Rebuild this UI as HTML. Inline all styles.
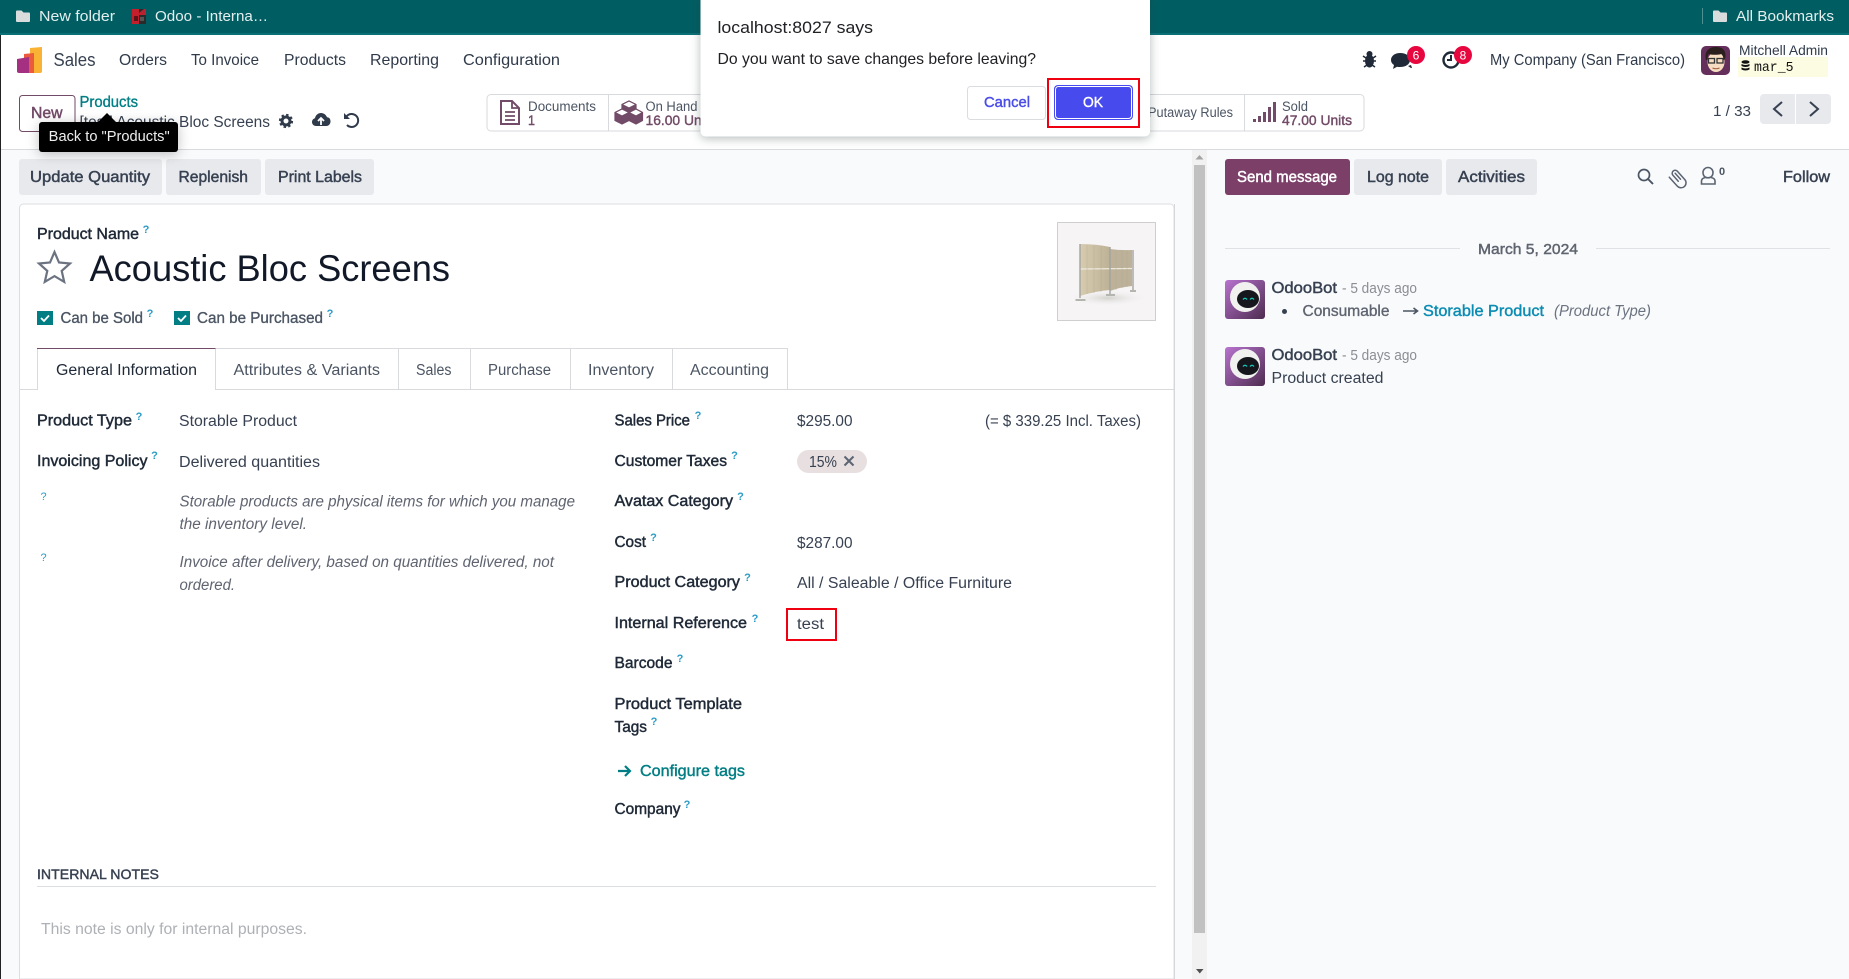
<!DOCTYPE html>
<html><head><meta charset="utf-8"><title>Acoustic Bloc Screens</title>
<style>
html,body{margin:0;padding:0;width:1849px;height:979px;overflow:hidden;background:#fff}
svg{display:block}
text{font-family:"Liberation Sans",sans-serif;font-size:15.5px;fill:#374151;white-space:pre}
.l{fill:#1f2937;stroke:#1f2937;stroke-width:.45}
.i{font-style:italic;fill:#5f6470}
.q{font-size:11px;font-weight:700;fill:#2b9cc6;text-anchor:middle}
.top{fill:#e4eeee;font-size:15px}
.m{font-size:16px;fill:#2f3a4a}
.s{font-size:13.5px;fill:#4b5563}
.sb{font-size:13.5px;fill:#714b67;stroke:#714b67;stroke-width:.4}
.btn{fill:#374151;stroke:#374151;stroke-width:.45;font-size:15.5px}
</style></head><body>
<svg xmlns="http://www.w3.org/2000/svg" width="1849" height="979" viewBox="0 0 1849 979">
<defs>
<linearGradient id="bot" x1="0" y1="0" x2="1" y2="1"><stop offset="0" stop-color="#b873cf"/><stop offset="1" stop-color="#4e2c50"/></linearGradient>
<linearGradient id="scr" x1="0" y1="0" x2="1" y2="0"><stop offset="0" stop-color="#d8ccb0"/><stop offset="1" stop-color="#bdb196"/></linearGradient>
<radialGradient id="shd"><stop offset="0" stop-color="#d2d2cd"/><stop offset="1" stop-color="#f5f3f4" stop-opacity="0"/></radialGradient>
</defs>

<!-- page backgrounds -->
<rect x="0" y="0" width="1849" height="979" fill="#fff"/>
<rect x="0" y="150" width="1849" height="829" fill="#f9fafb"/>
<rect x="0" y="149" width="1849" height="1" fill="#d8dadd"/>
<rect x="0" y="0" width="1849" height="34" fill="#005e63"/>
<rect x="0" y="33" width="1849" height="2" fill="#0b7076"/>
<rect x="0" y="35" width="1" height="944" fill="#222"/>

<!-- bookmarks -->
<path d="M16 11.500a1 1 0 0 1 1-1h4.500l2 2H29a1 1 0 0 1 1 1V21a1 1 0 0 1-1 1H17a1 1 0 0 1-1-1z" fill="#d9dcdc"/>
<text class="top" x="39" y="21" textLength="76" lengthAdjust="spacingAndGlyphs">New folder</text>
<rect x="132" y="9" width="14" height="15" fill="#2a2a2a"/><path d="M132 9h7v15h-7z" fill="#c4202c"/><path d="M139 13l5-4h2v6h-7z" fill="#b8232f"/><rect x="134" y="16" width="4" height="5" fill="#5c1218"/><rect x="140" y="17" width="4" height="4" fill="#555"/>
<text class="top" x="155" y="21" textLength="113" lengthAdjust="spacingAndGlyphs">Odoo - Interna…</text>
<rect x="1702" y="8" width="1" height="16" fill="#4d8f93"/>
<path d="M1713 11.500a1 1 0 0 1 1-1h4.500l2 2h5.500a1 1 0 0 1 1 1V21a1 1 0 0 1-1 1h-12a1 1 0 0 1-1-1z" fill="#d9dcdc"/>
<text class="top" x="1736" y="21" textLength="98" lengthAdjust="spacingAndGlyphs">All Bookmarks</text>

<!-- nav -->
<path d="M30 48l12-1v24a2 2 0 0 1-2 2H30z" fill="#f9b233"/>
<path d="M24 54l10-1v20H24z" fill="#ec5a3c"/>
<path d="M17 59l12-2v16H19a2 2 0 0 1-2-2z" fill="#a52f80"/>
<text x="53.500" y="66" style="font-size:18px;fill:#374151" textLength="42" lengthAdjust="spacingAndGlyphs">Sales</text>
<text class="m" x="119" y="65" textLength="48" lengthAdjust="spacingAndGlyphs">Orders</text>
<text class="m" x="191" y="65" textLength="68" lengthAdjust="spacingAndGlyphs">To Invoice</text>
<text class="m" x="284" y="65" textLength="62" lengthAdjust="spacingAndGlyphs">Products</text>
<text class="m" x="370" y="65" textLength="69" lengthAdjust="spacingAndGlyphs">Reporting</text>
<text class="m" x="463" y="65" textLength="97" lengthAdjust="spacingAndGlyphs">Configuration</text>

<!-- bug -->
<g fill="#1f2937"><ellipse cx="1369.500" cy="61" rx="4.500" ry="6.500"/><circle cx="1369.500" cy="54" r="3"/></g>
<path d="M1363 56l3 2M1376 56l-3 2M1363 61h3M1376 61h-3M1364 67l3-2M1375 67l-3-2" stroke="#1f2937" stroke-width="1.500" fill="none"/>
<!-- chat -->
<path d="M1400 53c6 0 10 3 10 7s-4 7-10 7c-1 0-2 0-3-.3l-4 2.300 1-4c-2-1.300-3-3-3-5 0-4 4-7 9-7z" fill="#1f2937"/>
<path d="M1408 66l3 2 1 0-1-3z" fill="#1f2937"/>
<circle cx="1416" cy="55" r="9" fill="#e8063f"/>
<text x="1416" y="59.500" style="font-size:12px;fill:#fff;text-anchor:middle">6</text>
<!-- clock -->
<circle cx="1451" cy="60" r="7.500" fill="none" stroke="#1f2937" stroke-width="2.400"/>
<path d="M1451 55v5h-4" stroke="#1f2937" stroke-width="2" fill="none"/>
<circle cx="1463" cy="55" r="9" fill="#e8063f"/>
<text x="1463" y="59.500" style="font-size:12px;fill:#fff;text-anchor:middle">8</text>
<text x="1490" y="65" style="font-size:16px;fill:#2f3a4a" textLength="195" lengthAdjust="spacingAndGlyphs">My Company (San Francisco)</text>

<!-- user avatar -->
<rect x="1701" y="46" width="29" height="29" rx="5" fill="#642f5a"/>
<ellipse cx="1716" cy="62" rx="8.500" ry="10" fill="#f6dcc0"/>
<path d="M1706 60c-2-9 3-13 10-13s11 4 9 12l-1.500 1c0-3-1-5-2-6-4 1-9 1-13 0-1 1-1 4-1 6z" fill="#2a1f1c"/>
<rect x="1708.500" y="58.500" width="6" height="4.500" fill="none" stroke="#333" stroke-width="1.300"/><rect x="1717" y="58.500" width="6" height="4.500" fill="none" stroke="#333" stroke-width="1.300"/>
<path d="M1712.500 68q3.500 1.500 7 0" stroke="#a0603f" fill="none"/>
<text x="1739" y="55" style="font-size:14px;fill:#2f3a4a" textLength="89" lengthAdjust="spacingAndGlyphs">Mitchell Admin</text>
<rect x="1738" y="57" width="90" height="20" fill="#fcfce2"/>
<g fill="#111"><ellipse cx="1745.500" cy="62" rx="4" ry="1.800"/><path d="M1741.500 64q4 2 8 0v2q-4 2-8 0z"/><path d="M1741.500 67.500q4 2 8 0v2q-4 2-8 0z"/></g>
<text x="1754" y="71" style='font-family:"Liberation Mono",monospace;font-size:14px;fill:#111' textLength="39.500" lengthAdjust="spacingAndGlyphs">mar_5</text>

<!-- control panel -->
<rect x="19.500" y="95.500" width="55.500" height="36" rx="3" fill="#fff" stroke="#714b67"/>
<text x="31" y="118" style="fill:#714b67;stroke:#714b67;stroke-width:.45;font-size:15.500px" textLength="31.500" lengthAdjust="spacingAndGlyphs">New</text>
<text x="79.500" y="107" style="fill:#017e84;stroke:#017e84;stroke-width:.35;font-size:15.500px" textLength="58.500" lengthAdjust="spacingAndGlyphs">Products</text>
<text x="79.500" y="127" style="font-size:15.500px;fill:#374151" textLength="190.500" lengthAdjust="spacingAndGlyphs">[test] Acoustic Bloc Screens</text>
<!-- gear -->
<circle cx="286" cy="121" r="4" fill="none" stroke="#2f3a4a" stroke-width="3"/>
<circle cx="286" cy="121" r="6" fill="none" stroke="#2f3a4a" stroke-width="2.200" stroke-dasharray="2.400 2.300"/>
<!-- cloud -->
<path d="M316 126c-2.500 0-4-2-4-4s1.500-3.500 3-3.800c.500-3 3-5.200 6-5.200s5 1.800 6 4.300c2.500 0 3.500 2 3.500 4.200s-1.700 4.500-4 4.500z" fill="#2f3a4a"/>
<path d="M321 125v-6M318 121l3-3 3 3" stroke="#fff" stroke-width="1.800" fill="none"/>
<!-- undo -->
<path d="M346.500 116.500a6.500 6.500 0 1 1 .5 8.500" stroke="#2f3a4a" stroke-width="2" fill="none"/>
<path d="M344 113v6h6z" fill="#2f3a4a"/>

<!-- stat buttons -->
<rect x="487" y="94.500" width="877" height="36.500" rx="4" fill="#fff" stroke="#d8dadd"/>
<rect x="608" y="95" width="1" height="36" fill="#d8dadd"/>
<rect x="1244" y="95" width="1" height="36" fill="#d8dadd"/>
<path d="M501 101h11l7 7v16h-18z" fill="none" stroke="#714b67" stroke-width="2"/>
<path d="M512 101v7h7M505 112h10M505 116h10M505 120h10" fill="none" stroke="#714b67" stroke-width="1.800"/>
<text class="s" x="528" y="111" textLength="68" lengthAdjust="spacingAndGlyphs">Documents</text>
<text class="sb" x="528" y="125" textLength="7" lengthAdjust="spacingAndGlyphs">1</text>
<g stroke="#714b67" stroke-width="1.200" stroke-linejoin="round">
<path d="M629 101l7 3.500v8l-7 3.500-7-3.500v-8z" fill="#714b67"/><path d="M629 101l7 3.500-7 3.500-7-3.500z" fill="#fff"/>
<path d="M622 109l7 3.500v8l-7 3.500-7-3.500v-8z" fill="#714b67"/><path d="M622 109l7 3.500-7 3.500-7-3.500z" fill="#fff"/><path d="M622 116v8"/>
<path d="M636 109l6.500 3.500v8l-6.500 3.500-7-3.500v-8z" fill="#714b67"/><path d="M636 109l6.500 3.500-6.500 3.500-7-3.500z" fill="#fff"/>
</g>
<text class="s" x="645.500" y="111" textLength="52" lengthAdjust="spacingAndGlyphs">On Hand</text>
<text class="sb" x="645.500" y="125" textLength="70" lengthAdjust="spacingAndGlyphs">16.00 Units</text>
<text class="s" x="1148" y="117" textLength="85" lengthAdjust="spacingAndGlyphs">Putaway Rules</text>
<g fill="#714b67"><rect x="1253" y="119" width="3" height="3"/><rect x="1258" y="116" width="3" height="6"/><rect x="1263" y="112" width="3" height="10"/><rect x="1268" y="107" width="3" height="15"/><rect x="1273" y="102" width="3" height="20"/></g>
<text class="s" x="1282" y="111" textLength="26" lengthAdjust="spacingAndGlyphs">Sold</text>
<text class="sb" x="1282" y="125" textLength="70" lengthAdjust="spacingAndGlyphs">47.00 Units</text>

<!-- pager -->
<text x="1713" y="116" style="font-size:15px;fill:#374151" textLength="38" lengthAdjust="spacingAndGlyphs">1 / 33</text>
<path d="M1760 98a4 4 0 0 1 4-4h31v30h-31a4 4 0 0 1-4-4z" fill="#e7e9ed"/>
<path d="M1796 94h31a4 4 0 0 1 4 4v22a4 4 0 0 1-4 4h-31z" fill="#e7e9ed"/>
<path d="M1782 102l-8 7 8 7M1810 102l8 7-8 7" fill="none" stroke="#374151" stroke-width="2"/>

<!-- action buttons -->
<rect x="19" y="159" width="143" height="36" rx="3" fill="#e7e9ed"/>
<rect x="166" y="159" width="95" height="36" rx="3" fill="#e7e9ed"/>
<rect x="265" y="159" width="109" height="36" rx="3" fill="#e7e9ed"/>
<text class="btn" x="30" y="182" textLength="120" lengthAdjust="spacingAndGlyphs">Update Quantity</text>
<text class="btn" x="178.500" y="182" textLength="69.500" lengthAdjust="spacingAndGlyphs">Replenish</text>
<text class="btn" x="278" y="182" textLength="84" lengthAdjust="spacingAndGlyphs">Print Labels</text>

<rect x="1225" y="159" width="125" height="36" rx="3" fill="#7b3f68"/>
<rect x="1354" y="159" width="88" height="36" rx="3" fill="#e7e9ed"/>
<rect x="1446" y="159" width="91" height="36" rx="3" fill="#e7e9ed"/>
<text class="btn" x="1237" y="182" style="fill:#fff;stroke:#fff" textLength="100" lengthAdjust="spacingAndGlyphs">Send message</text>
<text class="btn" x="1367" y="182" textLength="62" lengthAdjust="spacingAndGlyphs">Log note</text>
<text class="btn" x="1458" y="182" textLength="67" lengthAdjust="spacingAndGlyphs">Activities</text>
<text class="btn" x="1783" y="182" textLength="47" lengthAdjust="spacingAndGlyphs">Follow</text>
<!-- chatter tool icons -->
<circle cx="1644" cy="175" r="5.500" fill="none" stroke="#4b5563" stroke-width="1.700"/>
<path d="M1648 179l5 5" stroke="#4b5563" stroke-width="1.900"/>
<g transform="rotate(-42 1678.500 177)" fill="none" stroke="#5b6472" stroke-width="1.500" stroke-linecap="round"><path d="M1675.500 180v-8a3 3 0 0 1 6 0v11a5 5 0 0 1-10 0v-12"/><path d="M1678.500 180v-8"/></g>
<path d="M1703 172.500a5 5 0 0 1 10 0c0 2-.800 3.500-2 4.500-1.800 1-4.200 1-6 0-1.200-1-2-2.500-2-4.500z" fill="none" stroke="#5b6472" stroke-width="1.600"/>
<path d="M1705.500 177.500c-2.500.500-4 1.500-4 3.500v3h13.500v-3c0-2-1.500-3-4-3.500" fill="none" stroke="#5b6472" stroke-width="1.600"/>
<text x="1722" y="175" style="font-size:11px;font-weight:700;fill:#4b5563;text-anchor:middle">0</text>

<!-- card -->
<path d="M19.500 979V208a4 4 0 0 1 4-4H1170a4 4 0 0 1 4 4v771z" fill="#fff" stroke="#dcdee2" stroke-width="1"/>
<rect x="1174" y="204" width="1" height="775" fill="#d5d7db"/>

<text class="l" x="37" y="239" textLength="102" lengthAdjust="spacingAndGlyphs">Product Name</text>
<text class="q" x="146" y="233">?</text>
<path d="M54.500 252l4.500 10.500 11 1-8.300 7.400 2.500 11-9.700-5.800-9.700 5.800 2.500-11-8.300-7.400 11-1z" fill="none" stroke="#6b7280" stroke-width="2.200"/>
<text x="89.500" y="281" style="font-size:37px;fill:#111827" textLength="360.500" lengthAdjust="spacingAndGlyphs">Acoustic Bloc Screens</text>

<rect x="37" y="311" width="16" height="14" fill="#017e84"/>
<path d="M41 318l3 3 5-5.500" fill="none" stroke="#fff" stroke-width="1.800"/>
<text x="60.500" y="323" style="font-size:15.500px;fill:#4b5563;stroke:#4b5563;stroke-width:.35" textLength="82.500" lengthAdjust="spacingAndGlyphs">Can be Sold</text>
<text class="q" x="150" y="317">?</text>
<rect x="174" y="311" width="16" height="14" fill="#017e84"/>
<path d="M178 318l3 3 5-5.500" fill="none" stroke="#fff" stroke-width="1.800"/>
<text x="197" y="323" style="font-size:15.500px;fill:#4b5563;stroke:#4b5563;stroke-width:.35" textLength="126" lengthAdjust="spacingAndGlyphs">Can be Purchased</text>
<text class="q" x="330" y="317">?</text>

<!-- product image -->
<rect x="1057.500" y="222.500" width="98" height="98" fill="#f6f4f5" stroke="#cfcfcf"/>
<ellipse cx="1108" cy="298" rx="40" ry="8" fill="url(#shd)"/>
<path d="M1080 244q17 0 30 3v43q-14 1-30 6z" fill="url(#scr)"/>
<path d="M1110 249q10 1.500 22 1v36q-11 1-22 5z" fill="#bdb299"/>
<path d="M1080 269l52-.500" stroke="#eee9dd" stroke-width="1.300"/>
<g stroke="#ad a38b" stroke-width="0"></g>
<g stroke="#aea58d" stroke-width=".5" opacity=".7"><path d="M1087 245v49M1094 246v47M1101 246v46M1116 250v40M1122 250v38M1127 250v37"/></g>
<path d="M1080 244v54M1110 247v47M1133 250v41" stroke="#a3a39e" stroke-width="1.400"/>
<path d="M1075.500 300h10M1106 295h9M1130 291h6" stroke="#b5b5b0" stroke-width="2"/>

<!-- tabs -->
<rect x="20" y="389" width="1154" height="1" fill="#d8dadd"/>
<path d="M215.500 348.500H787.500V389M398.500 348V389M470.500 348V389M570.500 348V389M672.500 348V389" fill="none" stroke="#d8dadd"/>
<rect x="37.500" y="348.500" width="178" height="42" fill="#fff"/>
<path d="M37.500 390V348.500H215.500V390" fill="none" stroke="#d8dadd"/>
<rect x="37" y="348" width="178.500" height="1" fill="#714b67"/>
<text x="56" y="375" style="font-size:15.500px;fill:#1f2937" textLength="141" lengthAdjust="spacingAndGlyphs">General Information</text>
<text x="233.500" y="375" style="font-size:15.500px;fill:#4b5563" textLength="146.500" lengthAdjust="spacingAndGlyphs">Attributes &amp; Variants</text>
<text x="416" y="375" style="font-size:15.500px;fill:#4b5563" textLength="35.500" lengthAdjust="spacingAndGlyphs">Sales</text>
<text x="488" y="375" style="font-size:15.500px;fill:#4b5563" textLength="63" lengthAdjust="spacingAndGlyphs">Purchase</text>
<text x="588" y="375" style="font-size:15.500px;fill:#4b5563" textLength="66" lengthAdjust="spacingAndGlyphs">Inventory</text>
<text x="690" y="375" style="font-size:15.500px;fill:#4b5563" textLength="79" lengthAdjust="spacingAndGlyphs">Accounting</text>

<!-- left fields -->
<text class="l" x="37" y="425.500" textLength="95" lengthAdjust="spacingAndGlyphs">Product Type</text>
<text class="q" x="139" y="420">?</text>
<text x="179" y="426" textLength="118" lengthAdjust="spacingAndGlyphs">Storable Product</text>
<text class="l" x="37" y="466" textLength="110.500" lengthAdjust="spacingAndGlyphs">Invoicing Policy</text>
<text class="q" x="154.500" y="459">?</text>
<text x="179" y="467" textLength="141" lengthAdjust="spacingAndGlyphs">Delivered quantities</text>
<text class="q" x="43.600" y="500" style="font-weight:400">?</text>
<text class="i" x="179.500" y="506.500" textLength="395.500" lengthAdjust="spacingAndGlyphs">Storable products are physical items for which you manage</text>
<text class="i" x="179.500" y="529" textLength="127.500" lengthAdjust="spacingAndGlyphs">the inventory level.</text>
<text class="q" x="43.600" y="561" style="font-weight:400">?</text>
<text class="i" x="179.500" y="567" textLength="374.500" lengthAdjust="spacingAndGlyphs">Invoice after delivery, based on quantities delivered, not</text>
<text class="i" x="179.500" y="590" textLength="55.500" lengthAdjust="spacingAndGlyphs">ordered.</text>

<!-- right fields -->
<text class="l" x="614.500" y="425.500" textLength="75.500" lengthAdjust="spacingAndGlyphs">Sales Price</text>
<text class="q" x="698" y="419">?</text>
<text x="797" y="426" textLength="55.500" lengthAdjust="spacingAndGlyphs">$295.00</text>
<text x="985" y="426" textLength="156" lengthAdjust="spacingAndGlyphs">(= $ 339.25 Incl. Taxes)</text>
<text class="l" x="614.500" y="466" textLength="112.500" lengthAdjust="spacingAndGlyphs">Customer Taxes</text>
<text class="q" x="734.500" y="459">?</text>
<rect x="797" y="450" width="70" height="23" rx="11.500" fill="#e7dfe0"/>
<text x="809" y="467" textLength="28" lengthAdjust="spacingAndGlyphs">15%</text>
<path d="M844.500 465.500l9-9M844.500 456.500l9 9" stroke="#5b6472" stroke-width="2"/>
<text class="l" x="614.500" y="506" textLength="118.500" lengthAdjust="spacingAndGlyphs">Avatax Category</text>
<text class="q" x="740.500" y="500">?</text>
<text class="l" x="614.500" y="547" textLength="31.500" lengthAdjust="spacingAndGlyphs">Cost</text>
<text class="q" x="653.500" y="541">?</text>
<text x="797" y="548" textLength="55.500" lengthAdjust="spacingAndGlyphs">$287.00</text>
<text class="l" x="614.500" y="587" textLength="125.500" lengthAdjust="spacingAndGlyphs">Product Category</text>
<text class="q" x="747.500" y="581">?</text>
<text x="797" y="588" textLength="215" lengthAdjust="spacingAndGlyphs">All / Saleable / Office Furniture</text>
<text class="l" x="614.500" y="628" textLength="132.500" lengthAdjust="spacingAndGlyphs">Internal Reference</text>
<text class="q" x="755" y="622">?</text>
<rect x="787" y="609" width="49" height="31" fill="none" stroke="#ee0010" stroke-width="2"/>
<text x="797" y="629" textLength="27" lengthAdjust="spacingAndGlyphs">test</text>
<text class="l" x="614.500" y="668" textLength="58" lengthAdjust="spacingAndGlyphs">Barcode</text>
<text class="q" x="680" y="662">?</text>
<text class="l" x="614.500" y="709" textLength="127.500" lengthAdjust="spacingAndGlyphs">Product Template</text>
<text class="l" x="614.500" y="732" textLength="32.500" lengthAdjust="spacingAndGlyphs">Tags</text>
<text class="q" x="654" y="725">?</text>
<path d="M618 771h12M625 766l5 5-5 5" fill="none" stroke="#017e84" stroke-width="2.200"/>
<text x="640" y="776" style="fill:#017e84;stroke:#017e84;stroke-width:.4" textLength="105" lengthAdjust="spacingAndGlyphs">Configure tags</text>
<text class="l" x="614.500" y="814" textLength="66" lengthAdjust="spacingAndGlyphs">Company</text>
<text class="q" x="687" y="808">?</text>

<text x="37" y="879" style="font-size:14px;fill:#374151;stroke:#374151;stroke-width:.4" textLength="122" lengthAdjust="spacingAndGlyphs">INTERNAL NOTES</text>
<rect x="37" y="886" width="1119" height="1" fill="#dcdee2"/>
<text x="41" y="934" style="font-size:15.500px;fill:#adb0b5" textLength="266" lengthAdjust="spacingAndGlyphs">This note is only for internal purposes.</text>

<!-- scrollbar -->
<rect x="1192" y="150" width="15" height="829" fill="#f1f1f1"/>
<rect x="1194" y="165" width="11" height="768" fill="#c1c1c1"/>
<path d="M1199.500 155l4 4.500h-8z" fill="#a3a3a3"/>
<path d="M1196 969h7.500l-3.700 4.500z" fill="#505050"/>

<!-- chatter -->
<rect x="1225" y="248" width="235" height="1" fill="#dfe1e5"/>
<rect x="1596" y="248" width="234" height="1" fill="#dfe1e5"/>
<text x="1478" y="254" style="font-size:15px;fill:#5f6470;stroke:#5f6470;stroke-width:.45" textLength="100" lengthAdjust="spacingAndGlyphs">March 5, 2024</text>

<rect x="1225" y="280" width="40" height="39" rx="3" fill="url(#bot)"/>
<circle cx="1245" cy="297" r="15" fill="#f1f1ef"/>
<ellipse cx="1248" cy="299" rx="11" ry="9" fill="#15171c"/>
<path d="M1243 299.500q2-2.500 4-0M1250 299.500q2-2.500 4 0" stroke="#18c9bd" stroke-width="1.300" fill="none"/>
<text x="1271.500" y="293" style="font-size:15.500px;fill:#374151;stroke:#374151;stroke-width:.45" textLength="65.500" lengthAdjust="spacingAndGlyphs">OdooBot</text>
<text x="1342" y="293" style="font-size:15px;fill:#8a8d94" textLength="75" lengthAdjust="spacingAndGlyphs">- 5 days ago</text>
<circle cx="1284.500" cy="311.500" r="2.500" fill="#374151"/>
<text x="1302.500" y="316" style="font-size:15.500px;fill:#5f6470;stroke:#5f6470;stroke-width:.35" textLength="87" lengthAdjust="spacingAndGlyphs">Consumable</text>
<path d="M1403 311h14M1413.500 308l4 3-4 3" fill="none" stroke="#4b5563" stroke-width="1.600"/>
<text x="1423" y="316" style="font-size:15.500px;fill:#0b8cb3;stroke:#0b8cb3;stroke-width:.4" textLength="121" lengthAdjust="spacingAndGlyphs">Storable Product</text>
<text class="i" x="1554" y="316" style="fill:#6b7280" textLength="97" lengthAdjust="spacingAndGlyphs">(Product Type)</text>

<g transform="translate(0,67)">
<rect x="1225" y="280" width="40" height="39" rx="3" fill="url(#bot)"/>
<circle cx="1245" cy="297" r="15" fill="#f1f1ef"/>
<ellipse cx="1248" cy="299" rx="11" ry="9" fill="#15171c"/>
<path d="M1243 299.500q2-2.500 4 0M1250 299.500q2-2.500 4 0" stroke="#18c9bd" stroke-width="1.300" fill="none"/>
</g>
<text x="1271.500" y="360" style="font-size:15.500px;fill:#374151;stroke:#374151;stroke-width:.45" textLength="65.500" lengthAdjust="spacingAndGlyphs">OdooBot</text>
<text x="1342" y="360" style="font-size:15px;fill:#8a8d94" textLength="75" lengthAdjust="spacingAndGlyphs">- 5 days ago</text>
<text x="1271.500" y="383" style="font-size:15.500px;fill:#374151" textLength="112" lengthAdjust="spacingAndGlyphs">Product created</text>

<!-- tooltip -->
<path d="M107 113l9 9H98z" fill="#000"/>
<rect x="39" y="122" width="139" height="30" rx="3" fill="#000" style="filter:drop-shadow(0 2px 6px rgba(0,0,0,.25))"/>
<text x="48.700" y="141" style="font-size:14.500px;fill:#eee" textLength="121" lengthAdjust="spacingAndGlyphs">Back to "Products"</text>

<!-- browser dialog -->
<rect x="700.500" y="-10" width="449.500" height="146.500" rx="5" fill="#fff" style="filter:drop-shadow(0 2px 5px rgba(40,60,60,.35))"/>
<text x="717.500" y="33" style="font-size:17px;fill:#202124" textLength="155.500" lengthAdjust="spacingAndGlyphs">localhost:8027 says</text>
<text x="717.500" y="64" style="font-size:16px;fill:#202124" textLength="318.500" lengthAdjust="spacingAndGlyphs">Do you want to save changes before leaving?</text>
<rect x="967.500" y="86.500" width="78" height="33" rx="3" fill="#fff" stroke="#dadce0"/>
<text x="984" y="107" style="font-size:15px;fill:#4a4de8;stroke:#4a4de8;stroke-width:.4" textLength="46" lengthAdjust="spacingAndGlyphs">Cancel</text>
<rect x="1054" y="85" width="79" height="35" rx="4" fill="#474bee"/>
<rect x="1055.500" y="86.500" width="76" height="32" rx="3" fill="none" stroke="#fff" stroke-width="1"/>
<text x="1083" y="107" style="font-size:15px;fill:#fff;stroke:#fff;stroke-width:.4" textLength="20" lengthAdjust="spacingAndGlyphs">OK</text>
<rect x="1048" y="79" width="91" height="48" fill="none" stroke="#ee0010" stroke-width="2"/>
</svg>
</body></html>
